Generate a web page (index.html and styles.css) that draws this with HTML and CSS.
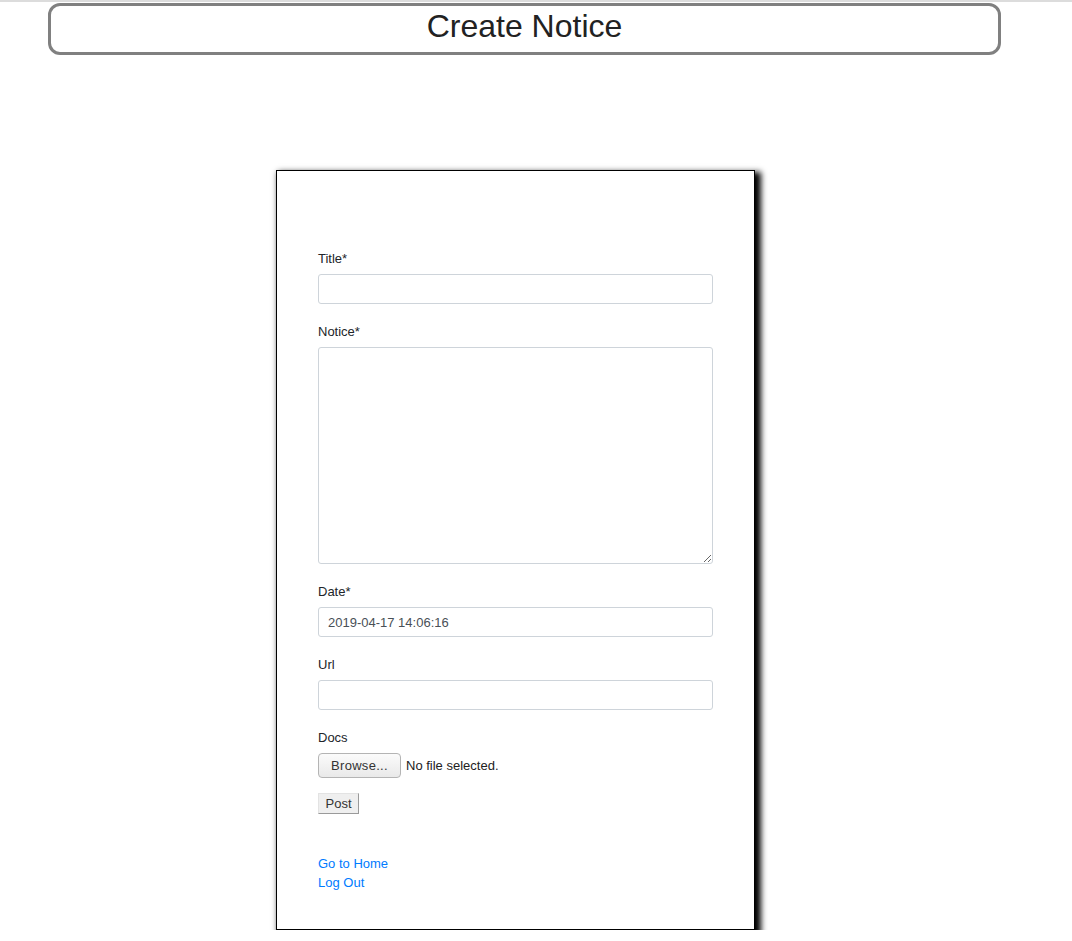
FILE: index.html
```html
<!DOCTYPE html>
<html>
<head>
<meta charset="utf-8">
<title>Create Notice</title>
<link rel="stylesheet" href="styles.css">
</head>
<body>
<div class="topline"></div>
<header class="page-header">
  <h1 class="page-title">Create Notice</h1>
</header>
<main class="card">
  <form class="notice-form">
    <div class="group">
      <label class="label">Title*</label>
      <input class="field" type="text">
    </div>
    <div class="group">
      <label class="label">Notice*</label>
      <textarea class="field area"></textarea>
    </div>
    <div class="group">
      <label class="label">Date*</label>
      <input class="field" type="text" value="2019-04-17 14:06:16">
    </div>
    <div class="group">
      <label class="label">Url</label>
      <input class="field" type="text">
    </div>
    <div class="group docs">
      <label class="label">Docs</label>
      <div class="file-row">
        <button type="button" class="browse">Browse...</button>
        <span class="file-text">No file selected.</span>
      </div>
    </div>
    <button type="button" class="post">Post</button>
  </form>
  <nav class="links">
    <a href="#" class="link">Go to Home</a>
    <a href="#" class="link">Log Out</a>
  </nav>
</main>
</body>
</html>
```
FILE: styles.css
```css
html, body {
  margin: 0;
  padding: 0;
  background: #fff;
  font-family: "Liberation Sans", Arial, sans-serif;
  color: #212529;
}

.topline {
  height: 2px;
  background: #dcdcdc;
}

.page-header {
  box-sizing: border-box;
  margin: 1px 0 0 48px;
  width: 953px;
  height: 52px;
  border: 3px solid #808080;
  border-radius: 12px;
  display: flex;
  justify-content: center;
}

.page-title {
  margin: 0;
  font-weight: normal;
  font-size: 32px;
  line-height: 40px;
  color: #222;
}

.card {
  box-sizing: border-box;
  width: 479px;
  margin: 115px 0 0 276px;
  border: 1px solid #000;
  background: #fff;
  box-shadow: 4px 4px 6px 2px #000;
  padding: 78px 41px 37px;
}

.notice-form {
  display: flex;
  flex-direction: column;
  align-items: flex-start;
}

.group {
  display: flex;
  flex-direction: column;
  width: 100%;
  margin-bottom: 18px;
}

.group.docs {
  margin-bottom: 15px;
}

.label {
  font-size: 13px;
  line-height: 19.5px;
  margin-bottom: 5.5px;
  color: #212529;
}

.field {
  box-sizing: border-box;
  width: 395px;
  height: 30px;
  margin: 0;
  border: 1px solid #ced4da;
  border-radius: 3px;
  padding: 0 9px;
  font-family: "Liberation Sans", Arial, sans-serif;
  font-size: 13px;
  color: #495057;
  background: #fff;
  outline: none;
}

.area {
  height: 217px;
  display: block;
  resize: vertical;
  padding: 6px 9px;
}

.file-row {
  display: flex;
  align-items: center;
  height: 25px;
}

.browse {
  box-sizing: border-box;
  width: 83px;
  height: 25px;
  margin: 0;
  padding: 0;
  border: 1px solid #b4b4b4;
  border-radius: 4px;
  background: linear-gradient(#fbfbfb, #e9e9e9);
  font-family: "Liberation Sans", Arial, sans-serif;
  font-size: 13px;
  color: #333;
  letter-spacing: 0.3px;
}

.file-text {
  margin-left: 5px;
  font-size: 13px;
  color: #222;
}

.post {
  box-sizing: border-box;
  width: 41px;
  height: 21px;
  margin: 0;
  padding: 0;
  background: #efefef;
  border: 1px solid;
  border-color: #e3e3e3 #9a9a9a #9a9a9a #e3e3e3;
  border-radius: 0;
  font-family: "Liberation Sans", Arial, sans-serif;
  font-size: 13px;
  color: #333;
}

.links {
  display: flex;
  flex-direction: column;
  align-items: flex-start;
  margin-top: 40px;
}

.link {
  font-size: 13px;
  line-height: 19px;
  color: #007bff;
  text-decoration: none;
}
```
